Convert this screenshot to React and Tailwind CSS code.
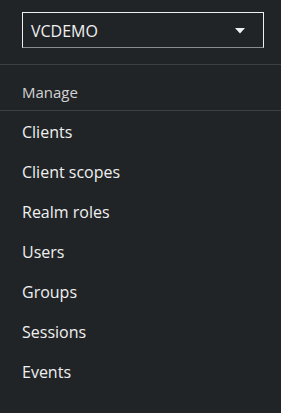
import { useState } from 'react';

const items = ['Clients', 'Client scopes', 'Realm roles', 'Users', 'Groups', 'Sessions', 'Events'];

const App = () => {
  const [active, setActive] = useState(null);

  return (
    <div
      className='w-[281px] h-[413px] bg-[#212427] flex flex-col overflow-hidden'
      style={{ fontFamily: '"Open Sans", "Liberation Sans", sans-serif' }}
    >
      {/* Realm selector */}
      <div className='pt-[12px] pb-[16px] pl-[22px] pr-[17px] border-b border-[#3c3f42]'>
        <button className='w-full h-[36px] flex items-center justify-between pl-[8px] pr-[18px] pt-[1px] border border-[#f0f0f0] border-b-[#8a8d90] text-[#f0f0f0] text-[16px]'>
          <span>VCDEMO</span>
          <svg width='10' height='6' viewBox='0 0 10 6'>
            <path d='M0 0 L10 0 L5 5.5 Z' fill='#f0f0f0' />
          </svg>
        </button>
      </div>

      {/* Section title */}
      <div className='h-[46px] flex items-center pl-[22px] pt-[9px] border-b border-[#3c3f42] text-[15px] text-[#d2d2d2]'>
        Manage
      </div>

      {/* Nav items */}
      <ul className='flex flex-col'>
        {items.map((item) => (
          <li key={item}>
            <button
              className='w-full h-[40px] flex items-center pl-[22px] pt-[2px] text-[16px] text-[#f0f0f0] text-left'
              onClick={() => setActive(item)}
            >
              {item}
            </button>
          </li>
        ))}
      </ul>
    </div>
  );
};

export default App;
